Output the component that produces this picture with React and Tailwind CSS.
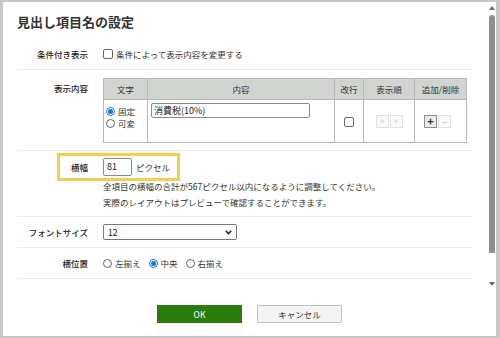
import React from "react";

function Radio({ checked }) {
  return (
    <span
      className={
        checked
          ? "inline-flex w-[9px] h-[9px] rounded-full border border-[#1a73e8] items-center justify-center shrink-0"
          : "inline-flex w-[9px] h-[9px] rounded-full border border-[#666] bg-white shrink-0"
      }
    >
      {checked && <span className="w-[5px] h-[5px] rounded-full bg-[#1a73e8]" />}
    </span>
  );
}

function Check() {
  return <span className="inline-block w-[10px] h-[10px] rounded-[2px] border border-[#666] bg-white shrink-0" />;
}

function Row({ label, children, className, labelClass }) {
  return (
    <div className={"grid grid-cols-[71px_1fr] gap-x-[15px] border-b border-[#ececec] " + className}>
      <div className={"text-right font-medium text-[#222] " + labelClass}>{label}</div>
      <div className="min-w-0">{children}</div>
    </div>
  );
}

function Triangle({ up }) {
  return up ? (
    <div className="w-0 h-0 border-x-[3px] border-x-transparent border-b-[4px] border-b-[#6b6b6b]" />
  ) : (
    <div className="w-0 h-0 border-x-[3px] border-x-transparent border-t-[4px] border-t-[#6b6b6b]" />
  );
}

export default function App() {
  return (
    <div className="w-[500px] h-[338px] bg-[#c8c8c8] pl-[3px] pt-[2px] pr-[4px] pb-[2px] font-['Noto_Sans_CJK_JP',sans-serif] text-[8.5px] text-[#333] overflow-hidden">
      <div className="w-[493px] h-[334px] bg-white flex">
        {/* main column */}
        <div className="w-[485px] flex flex-col">
          <div className="h-[37px] pl-[14px] pt-[12px]">
            <h1 className="text-[13px] leading-[16px] font-bold text-[#333]">見出し項目名の設定</h1>
          </div>

          <div className="ml-[14px] w-[455px]">
            {/* 条件付き表示 */}
            <Row label="条件付き表示" className="h-[31px] items-center" labelClass="">
              <div className="flex items-center gap-[3px]">
                <Check />
                <span>条件によって表示内容を変更する</span>
              </div>
            </Row>

            {/* 表示内容 */}
            <Row label="表示内容" className="pt-[8px] pb-[7px] items-start" labelClass="leading-[20px]">
              <table className="table-fixed w-[363px] border-collapse border border-[#b8b8b8]">
                <colgroup>
                  <col className="w-[44px]" />
                  <col className="w-[187px]" />
                  <col className="w-[29px]" />
                  <col className="w-[51px]" />
                  <col className="w-[52px]" />
                </colgroup>
                <thead>
                  <tr className="h-[21px] bg-[#d1d4d1]">
                    <th className="border border-[#b8b8b8] font-normal">文字</th>
                    <th className="border border-[#b8b8b8] font-normal">内容</th>
                    <th className="border border-[#b8b8b8] font-normal">改行</th>
                    <th className="border border-[#b8b8b8] font-normal">表示順</th>
                    <th className="border border-[#b8b8b8] font-normal">追加/削除</th>
                  </tr>
                </thead>
                <tbody>
                  <tr className="h-[43px]">
                    <td className="border border-[#b8b8b8] align-top pt-[5px] pl-[2px]">
                      <div className="flex items-center gap-[3px] leading-[12px]">
                        <Radio checked />
                        <span>固定</span>
                      </div>
                      <div className="flex items-center gap-[3px] leading-[12px]">
                        <Radio />
                        <span>可変</span>
                      </div>
                    </td>
                    <td className="border border-[#b8b8b8] align-top pt-[3px] pl-[3px]">
                      <div className="w-[159px] h-[15px] border border-[#8a8a8a] rounded-[2px] pl-[2px] flex items-center text-[9px] text-[#222]">
                        消費税(10%)
                      </div>
                    </td>
                    <td className="border border-[#b8b8b8] align-middle">
                      <div className="flex justify-center pt-[1px]">
                        <Check />
                      </div>
                    </td>
                    <td className="border border-[#b8b8b8] align-middle">
                      <div className="flex justify-center gap-[1px] pt-[1px]">
                        <span className="w-[13px] h-[13px] border border-[#e2e2e2] bg-[#fafafa] flex items-center justify-center text-[#c4c4c4] text-[7px]">˄</span>
                        <span className="w-[13px] h-[13px] border border-[#e2e2e2] bg-[#fafafa] flex items-center justify-center text-[#c4c4c4] text-[7px]">˅</span>
                      </div>
                    </td>
                    <td className="border border-[#b8b8b8] align-middle">
                      <div className="flex pl-[9px] gap-[1px] pt-[1px]">
                        <span className="w-[13px] h-[13px] border border-[#8c8c8c] bg-[#ececec] flex items-center justify-center text-[#333] text-[11px] font-bold leading-none">+</span>
                        <span className="w-[13px] h-[13px] border border-[#e2e2e2] bg-[#fafafa] flex items-center justify-center text-[#c4c4c4] text-[10px] leading-none">−</span>
                      </div>
                    </td>
                  </tr>
                </tbody>
              </table>
            </Row>

            {/* 横幅 */}
            <div className="relative">
              <Row label="横幅" className="pt-[7px] pb-[6px] items-start" labelClass="leading-[18px]">
                <div className="flex items-center gap-[4px] h-[18px]">
                  <div className="w-[29px] h-[18px] border border-[#8a8a8a] rounded-[2px] pl-[3px] flex items-center text-[9px] text-[#222]">81</div>
                  <span>ピクセル</span>
                </div>
                <div className="mt-[2px] leading-[16px]">
                  <p>全項目の横幅の合計が567ピクセル以内になるように調整してください。</p>
                  <p>実際のレイアウトはプレビューで確認することができます。</p>
                </div>
              </Row>
              <div className="absolute left-[40px] top-[2px] w-[123px] h-[28px] border-[3px] border-[#f4cf4f]" />
            </div>

            {/* フォントサイズ */}
            <Row label="フォントサイズ" className="h-[31px] items-center" labelClass="">
              <div className="w-[134px] h-[16px] border border-[#777] rounded-[2px] flex items-center justify-between pl-[4px] pr-[4px] text-[#222]">
                <span>12</span>
                <svg width="7" height="5" viewBox="0 0 7 5">
                  <polyline points="0.8,0.8 3.5,3.6 6.2,0.8" fill="none" stroke="#222" strokeWidth="1.5" />
                </svg>
              </div>
            </Row>

            {/* 横位置 */}
            <Row label="横位置" className="h-[31px] items-center" labelClass="">
              <div className="flex items-center gap-[8px]">
                <div className="flex items-center gap-[3px]">
                  <Radio />
                  <span>左揃え</span>
                </div>
                <div className="flex items-center gap-[3px]">
                  <Radio checked />
                  <span>中央</span>
                </div>
                <div className="flex items-center gap-[3px]">
                  <Radio />
                  <span>右揃え</span>
                </div>
              </div>
            </Row>
          </div>

          {/* buttons */}
          <div className="mt-[26px] pl-[8px] flex justify-center gap-[15px]">
            <button className="w-[85px] h-[18px] bg-[#2a7b0c] text-white text-[8.5px] flex items-center justify-center">OK</button>
            <button className="w-[85px] h-[18px] bg-[#f3f4f3] border border-[#c2c2c2] rounded-[1px] text-[#333] text-[8.5px] flex items-center justify-center">キャンセル</button>
          </div>
        </div>

        {/* scrollbar */}
        <div className="w-[7px] flex flex-col items-center pt-[4px]">
          <Triangle up />
          <div className="mt-[5px] w-[6px] h-[238px] rounded-t-[3px] bg-[#8f8f8f]" />
          <div className="mt-[29px]">
            <Triangle />
          </div>
        </div>
      </div>
    </div>
  );
}
